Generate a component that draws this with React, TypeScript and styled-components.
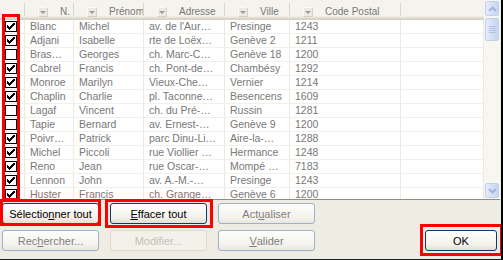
import React from 'react';
import styled, { createGlobalStyle, css } from 'styled-components';

const Global = createGlobalStyle`
  html, body { margin: 0; padding: 0; background: #ffffff; }
  body { font-family: "Liberation Sans", Arial, sans-serif; }
`;

const COLS = [25, 49, 70, 81, 65, 111, 83];

const Frame = styled.div`
  position: relative;
  width: 503px;
  height: 260px;
  box-sizing: border-box;
  background: #efede3;
  border-right: 2px solid #000;
  border-bottom: 1px solid #1e1e1e;
  padding-right: 1px;
  display: flex;
  flex-direction: column;
  overflow: hidden;
`;

const GridBox = styled.div`
  height: 200px;
  box-sizing: border-box;
  border-bottom: 1px solid #8f8d84;
  display: flex;
  background: #ffffff;
  flex-shrink: 0;
`;

const Table = styled.div`
  width: 484px;
  overflow: hidden;
  display: flex;
  flex-direction: column;
`;

const HeaderRow = styled.div`
  display: flex;
  height: 20px;
  flex-shrink: 0;
  background: linear-gradient(
    to bottom,
    #f4f3ee 0px,
    #f4f3ee 16px,
    #e9e7de 17px,
    #e0ddd1 18px,
    #d5d2c5 19px,
    #d5d2c5 20px
  );
`;

const HeaderCell = styled.div<{ $w: number; $sep: boolean }>`
  position: relative;
  width: ${(p) => p.$w}px;
  flex-shrink: 0;
  box-sizing: border-box;
  display: flex;
  align-items: center;
  gap: 12px;
  padding: 3px 0 0 13px;
  overflow: hidden;
  font-size: 10px;
  color: #787878;
  white-space: nowrap;
  ${(p) =>
    p.$sep &&
    css`
      &::after {
        content: '';
        position: absolute;
        right: 0;
        top: 3px;
        height: 13px;
        width: 1px;
        background: #d9d6ca;
        box-shadow: 1px 0 0 #ffffff;
      }
    `}
`;

const DropBtn = styled.span`
  width: 10px;
  height: 10px;
  flex-shrink: 0;
  box-sizing: border-box;
  background: #ebe9e1;
  border: 1px solid;
  border-color: #fbfaf7 #d3d0c5 #d3d0c5 #fbfaf7;
  display: flex;
  align-items: center;
  justify-content: center;
  &::before {
    content: '';
    border-left: 3px solid transparent;
    border-right: 3px solid transparent;
    border-top: 3px solid #9d9b92;
    margin-top: 1px;
  }
`;

const Row = styled.div`
  display: flex;
  height: 14px;
  flex-shrink: 0;
`;

const Cell = styled.div<{ $w: number }>`
  width: ${(p) => p.$w}px;
  flex-shrink: 0;
  box-sizing: border-box;
  height: 14px;
  border-right: 1px solid #ebe9e2;
  border-bottom: 1px solid #f1f0eb;
  padding: 0 0 0 5px;
  font-size: 10.5px;
  line-height: 13px;
  color: #787878;
  white-space: nowrap;
  overflow: hidden;
`;

const CheckCell = styled(Cell)`
  padding: 1px 0 0 5px;
`;

const Box = styled.div`
  width: 12px;
  height: 11px;
  box-sizing: border-box;
  border: 1px solid #000;
  background: #fff;
  display: flex;
  align-items: center;
  justify-content: center;
`;

const ScrollBar = styled.div`
  width: 16px;
  box-sizing: border-box;
  padding: 1px;
  background: #f7f6f1;
  display: flex;
  flex-direction: column;
  gap: 2px;
`;

const ScrollPart = styled.div<{ $h: number }>`
  height: ${(p) => p.$h}px;
  flex-shrink: 0;
  box-sizing: border-box;
  border: 1px solid #c4d1ee;
  border-radius: 2px;
  background: linear-gradient(to right, #e6ecfa, #d2ddf5 60%, #c8d5f2);
  display: flex;
  align-items: center;
  justify-content: center;
`;

const Track = styled.div`
  flex: 1;
`;

const Buttons = styled.div`
  display: grid;
  grid-template-columns: 97px 97px 97px 1fr 72px;
  grid-template-rows: 21px 21px;
  column-gap: 11px;
  row-gap: 6px;
  padding: 3px 3px 0 2px;
`;

type Variant = 'default' | 'soft' | 'disabled';

const Btn = styled.div<{ $v: Variant; $col: number; $row: number }>`
  grid-column: ${(p) => p.$col};
  grid-row: ${(p) => p.$row};
  box-sizing: border-box;
  border-radius: 3px;
  display: flex;
  align-items: center;
  justify-content: center;
  font-size: 11px;
  white-space: nowrap;
  ${(p) =>
    p.$v === 'default'
      ? css`
          border: 1px solid #0f3767;
          background: linear-gradient(to bottom, #ffffff, #f3f2ec 70%, #e2dfd4);
          color: #000;
        `
      : p.$v === 'soft'
      ? css`
          border: 1px solid #9fb1cc;
          background: linear-gradient(to bottom, #fdfdfb, #f4f3ee 70%, #e9e7df);
          color: #7f7f7f;
        `
      : css`
          border: 1px solid #dcd9cf;
          background: #f3f1e9;
          color: #c4c1b6;
        `}
`;

const Mn = styled.span`
  text-decoration: underline;
  text-underline-offset: 1px;
`;

const Highlight = styled.div<{ $x: number; $y: number; $w: number; $h: number }>`
  position: absolute;
  left: ${(p) => p.$x}px;
  top: ${(p) => p.$y}px;
  width: ${(p) => p.$w}px;
  height: ${(p) => p.$h}px;
  box-sizing: border-box;
  border: 3px solid #ff0000;
  pointer-events: none;
`;

const Check = () => (
  <svg width="8" height="7" viewBox="0 0 8 7" shapeRendering="crispEdges">
    <path
      d="M0 2h1v3H0z M1 3h1v3H1z M2 4h1v3H2z M3 3h1v3H3z M4 2h1v3H4z M5 1h1v3H5z M6 0h1v3H6z M7 0h1v2H7z"
      fill="#000"
    />
  </svg>
);

const Chevron = ({ up }: { up: boolean }) => (
  <svg width="9" height="6" viewBox="0 0 9 6">
    <polyline
      points={up ? '1,5 4.5,1.5 8,5' : '1,1 4.5,4.5 8,1'}
      fill="none"
      stroke="#9fb2da"
      strokeWidth="1.8"
    />
  </svg>
);

const Grip = () => (
  <svg width="7" height="8" viewBox="0 0 7 8">
    <path d="M0 0.5h7M0 2.5h7M0 4.5h7M0 6.5h7" stroke="#b3c3e6" strokeWidth="1" />
  </svg>
);

const HEADERS = ['', 'N.', 'Prénom', 'Adresse', 'Ville', 'Code Postal', ''];

const ROWS: [boolean, string, string, string, string, string][] = [
  [true, 'Blanc', 'Michel', "av. de l'Aur…", 'Presinge', '1243'],
  [true, 'Adjani', 'Isabelle', 'rte de Loëx…', 'Genève 2', '1211'],
  [false, 'Bras…', 'Georges', 'ch. Marc-C…', 'Genève 18', '1200'],
  [true, 'Cabrel', 'Francis', 'ch. Pont-de…', 'Chambésy', '1292'],
  [true, 'Monroe', 'Marilyn', 'Vieux-Che…', 'Vernier', '1214'],
  [true, 'Chaplin', 'Charlie', 'pl. Taconne…', 'Besencens', '1609'],
  [false, 'Lagaf', 'Vincent', 'ch. du Pré-…', 'Russin', '1281'],
  [false, 'Tapie', 'Bernard', 'av. Ernest-…', 'Genève 9', '1200'],
  [true, 'Poivr…', 'Patrick', 'parc Dinu-Li…', 'Aire-la-…', '1288'],
  [true, 'Michel', 'Piccoli', 'rue Viollier …', 'Hermance', '1248'],
  [true, 'Reno', 'Jean', 'rue Oscar-…', 'Mompé …', '7183'],
  [true, 'Lennon', 'John', 'av. A.-M.-…', 'Presinge', '1243'],
  [true, 'Huster', 'Francis', 'ch. Grange…', 'Genève 6', '1200'],
];

export default function App() {
  return (
    <>
      <Global />
      <Frame>
        <GridBox>
          <Table>
            <HeaderRow>
              {HEADERS.map((h, i) => (
                <HeaderCell key={i} $w={COLS[i]} $sep={i < 6}>
                  {h && <DropBtn />}
                  {h && <span>{h}</span>}
                </HeaderCell>
              ))}
            </HeaderRow>
            {ROWS.map((r, ri) => (
              <Row key={ri}>
                <CheckCell $w={COLS[0]}>
                  <Box>{r[0] && <Check />}</Box>
                </CheckCell>
                {r.slice(1).map((v, ci) => (
                  <Cell key={ci} $w={COLS[ci + 1]}>
                    {v as string}
                  </Cell>
                ))}
                <Cell $w={COLS[6]} />
              </Row>
            ))}
          </Table>
          <ScrollBar>
            <ScrollPart $h={15}>
              <Chevron up />
            </ScrollPart>
            <ScrollPart $h={23}>
              <Grip />
            </ScrollPart>
            <Track />
            <ScrollPart $h={15}>
              <Chevron up={false} />
            </ScrollPart>
          </ScrollBar>
        </GridBox>
        <Buttons>
          <Btn $v="default" $col={1} $row={1}>
            Sélectio<Mn>n</Mn>ner tout
          </Btn>
          <Btn $v="default" $col={2} $row={1}>
            <Mn>E</Mn>ffacer tout
          </Btn>
          <Btn $v="soft" $col={3} $row={1}>
            Act<Mn>u</Mn>aliser
          </Btn>
          <Btn $v="soft" $col={1} $row={2}>
            Rec<Mn>h</Mn>ercher...
          </Btn>
          <Btn $v="disabled" $col={2} $row={2}>
            Modifier...
          </Btn>
          <Btn $v="soft" $col={3} $row={2}>
            <Mn>V</Mn>alider
          </Btn>
          <Btn $v="default" $col={5} $row={2}>
            OK
          </Btn>
        </Buttons>
        <Highlight $x={2} $y={14} $w={18} $h={187} />
        <Highlight $x={0} $y={199} $w={101} $h={27} />
        <Highlight $x={105} $y={199} $w={108} $h={29} />
        <Highlight $x={420} $y={224} $w={83} $h={32} />
      </Frame>
    </>
  );
}
